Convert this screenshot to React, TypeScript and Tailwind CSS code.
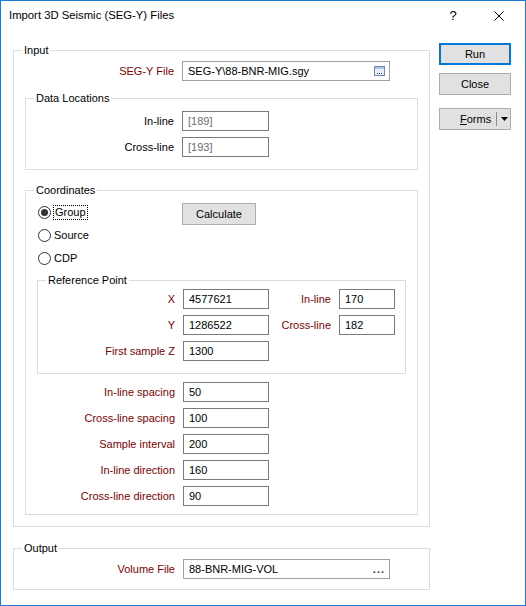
import React from "react";

const red = "text-[#800000]";

function Field({
  label,
  value,
  labelW,
  inputW = "w-[86px]",
  labelColor = red,
  valueColor = "text-black",
  className = "",
}: {
  label: string;
  value: string;
  labelW: string;
  inputW?: string;
  labelColor?: string;
  valueColor?: string;
  className?: string;
}) {
  return (
    <div className={`flex items-center h-[20px] ${className}`}>
      <div className={`${labelW} pr-[8px] text-right ${labelColor}`}>{label}</div>
      <div
        className={`${inputW} h-[20px] border border-[#7a7a7a] bg-white flex items-center pl-[5px] ${valueColor}`}
      >
        {value}
      </div>
    </div>
  );
}

function Legend({ children }: { children: React.ReactNode }) {
  return <legend className="ml-[8px] px-[2px] leading-[13px]">{children}</legend>;
}

function Radio({ label, checked = false }: { label: string; checked?: boolean }) {
  return (
    <div className="flex items-center h-[23px]">
      <span className="w-[13px] h-[13px] rounded-full border border-[#333] bg-white flex items-center justify-center">
        {checked && <span className="w-[7px] h-[7px] rounded-full bg-[#333]" />}
      </span>
      {checked ? (
        <span className="ml-[2px] px-[1px] leading-[13px] border border-dotted border-black">{label}</span>
      ) : (
        <span className="ml-[3px]">{label}</span>
      )}
    </div>
  );
}

function Button({ children, primary = false, className = "" }: { children: React.ReactNode; primary?: boolean; className?: string }) {
  return (
    <div
      className={`h-[22px] bg-[#e1e1e1] flex items-center justify-center ${
        primary ? "border-2 border-[#0078d7]" : "border border-[#adadad]"
      } ${className}`}
    >
      {children}
    </div>
  );
}

export default function App() {
  return (
    <div className="w-[526px] h-[606px] border border-[#1c7cd5] bg-white flex flex-col font-['Liberation_Sans',Arial,sans-serif] text-[11px] text-black">
      {/* title bar */}
      <div className="h-[29px] flex items-center pl-[8px] pr-[3px]">
        <div className="text-[11.3px] text-black">Import 3D Seismic (SEG-Y) Files</div>
        <div className="ml-auto flex items-center">
          <div className="w-[46px] text-center text-[13px]">?</div>
          <div className="w-[46px] flex justify-center">
            <svg width="10" height="10" viewBox="0 0 10 10">
              <path d="M0.5 0.5 L9.5 9.5 M9.5 0.5 L0.5 9.5" stroke="#000" strokeWidth="1" />
            </svg>
          </div>
        </div>
      </div>

      <div className="flex pl-[12px] pt-[13px]">
        {/* left column */}
        <div className="w-[417px] mt-[1px]">
          <fieldset className="border border-[#dcdcdc] min-w-0 pb-[11px]">
            <Legend>Input</Legend>
            <div className="flex items-center h-[20px] mt-[4px]">
              <div className={`w-[168px] pr-[8px] text-right ${red}`}>SEG-Y File</div>
              <div className="w-[208px] h-[20px] border border-[#a0a0a0] bg-white flex items-center justify-between pl-[5px] pr-[4px]">
                <span>SEG-Y\88-BNR-MIG.sgy</span>
                <svg width="11" height="10" viewBox="0 0 11 10">
                  <rect x="0.5" y="0.5" width="10" height="9" fill="#e6eef8" stroke="#6f87b3" />
                  <rect x="1" y="1" width="9" height="2" fill="#b3c6e4" />
                  <rect x="3" y="7" width="1" height="1" fill="#1f3c78" />
                  <rect x="5" y="7" width="1" height="1" fill="#1f3c78" />
                  <rect x="7" y="7" width="1" height="1" fill="#1f3c78" />
                </svg>
              </div>
            </div>

            <fieldset className="border border-[#dcdcdc] min-w-0 mt-[11px] mx-[11px] pb-[12px]">
              <Legend>Data Locations</Legend>
              <Field
                className="mt-[6px]"
                label="In-line"
                value="[189]"
                labelW="w-[156px]"
                inputW="w-[87px]"
                labelColor="text-black"
                valueColor="text-[#6d6d6d]"
              />
              <Field
                className="mt-[6px]"
                label="Cross-line"
                value="[193]"
                labelW="w-[156px]"
                inputW="w-[87px]"
                labelColor="text-black"
                valueColor="text-[#6d6d6d]"
              />
            </fieldset>

            <fieldset className="border border-[#dcdcdc] min-w-0 mt-[14px] mx-[11px] pb-[8px]">
              <Legend>Coordinates</Legend>
              <div className="flex mt-[4px]">
                <div className="w-[156px] pl-[12px]">
                  <Radio label="Group" checked />
                  <Radio label="Source" />
                  <Radio label="CDP" />
                </div>
                <Button className="w-[74px] mt-[2px]">Calculate</Button>
              </div>

              <fieldset className="border border-[#dcdcdc] min-w-0 mt-[4px] mx-[11px] pb-[12px]">
                <Legend>Reference Point</Legend>
                <div className="flex items-center h-[20px] mt-[2px]">
                  <Field label="X" value="4577621" labelW="w-[145px]" />
                  <Field label="In-line" value="170" labelW="w-[70px]" inputW="w-[56px]" />
                </div>
                <div className="flex items-center h-[20px] mt-[6px]">
                  <Field label="Y" value="1286522" labelW="w-[145px]" />
                  <Field label="Cross-line" value="182" labelW="w-[70px]" inputW="w-[56px]" />
                </div>
                <Field className="mt-[6px]" label="First sample Z" value="1300" labelW="w-[145px]" />
              </fieldset>

              <Field className="mt-[8px]" label="In-line spacing" value="50" labelW="w-[157px]" />
              <Field className="mt-[6px]" label="Cross-line spacing" value="100" labelW="w-[157px]" />
              <Field className="mt-[6px]" label="Sample interval" value="200" labelW="w-[157px]" />
              <Field className="mt-[6px]" label="In-line direction" value="160" labelW="w-[157px]" />
              <Field className="mt-[6px]" label="Cross-line direction" value="90" labelW="w-[157px]" />
            </fieldset>
          </fieldset>

          <fieldset className="border border-[#dcdcdc] min-w-0 mt-[15px] pb-[10px]">
            <Legend>Output</Legend>
            <div className="flex items-center h-[20px] mt-[4px]">
              <div className={`w-[169px] pr-[8px] text-right ${red}`}>Volume File</div>
              <div className="w-[207px] h-[20px] border border-[#a0a0a0] bg-white flex items-center justify-between pl-[5px] pr-[4px]">
                <span>88-BNR-MIG-VOL</span>
                <span className="font-bold text-[#333] tracking-[1px] leading-[10px]">...</span>
              </div>
            </div>
          </fieldset>
        </div>

        {/* buttons */}
        <div className="ml-[9px] w-[72px] flex flex-col">
          <Button primary>Run</Button>
          <Button className="mt-[8px]">Close</Button>
          <Button className="mt-[13px] justify-start">
            <span className="ml-[20px]">
              <span className="underline">F</span>orms
            </span>
            <span className="ml-[5px] w-px h-[14px] bg-[#8a8a8a]" />
            <svg className="ml-[4px]" width="7" height="4" viewBox="0 0 7 4">
              <path d="M0 0 L7 0 L3.5 4 Z" fill="#000" />
            </svg>
          </Button>
        </div>
      </div>
    </div>
  );
}
